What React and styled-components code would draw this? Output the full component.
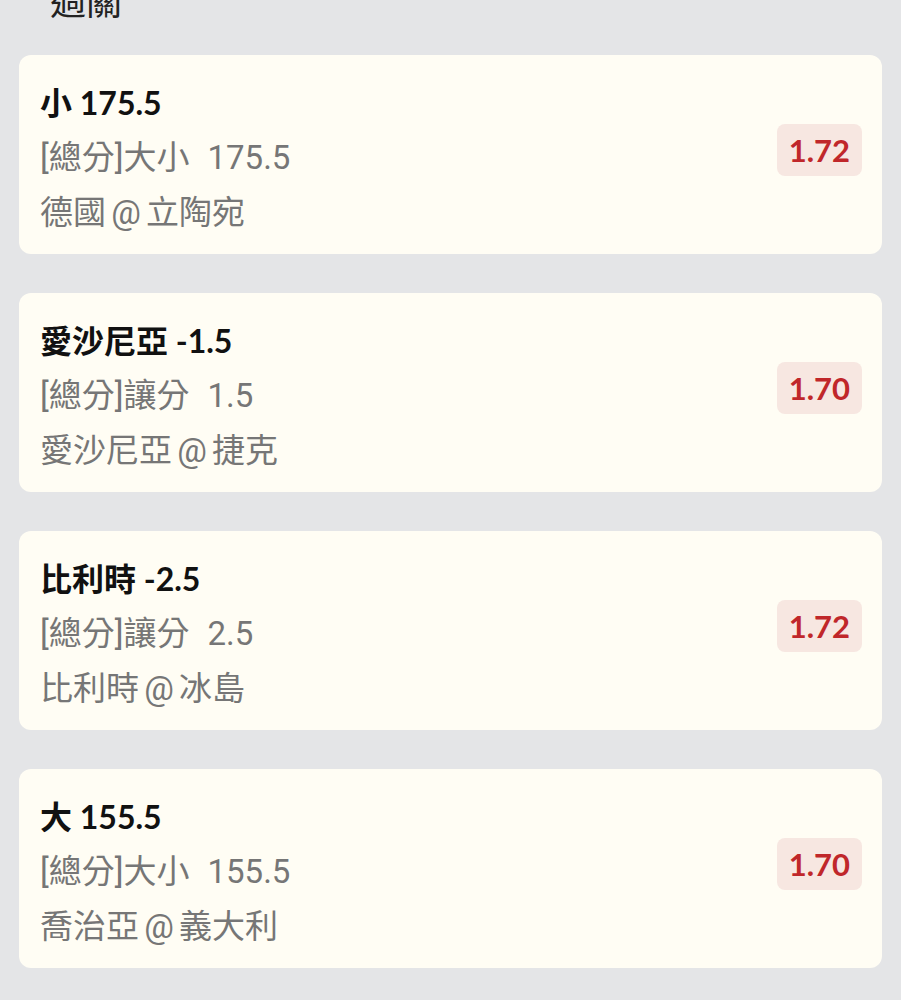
import styled, { createGlobalStyle } from "styled-components";

const GlobalStyle = createGlobalStyle`
  html, body {
    margin: 0;
    padding: 0;
    background: #e4e5e7;
  }
  body {
    font-family: Lato, "Noto Sans CJK TC", sans-serif;
    overflow: hidden;
  }
`;

const bets = [
  { title: "小 175.5", market: "[總分]大小", line: "175.5", match: "德國 @ 立陶宛", odds: "1.72" },
  { title: "愛沙尼亞 -1.5", market: "[總分]讓分", line: "1.5", match: "愛沙尼亞 @ 捷克", odds: "1.70" },
  { title: "比利時 -2.5", market: "[總分]讓分", line: "2.5", match: "比利時 @ 冰島", odds: "1.72" },
  { title: "大 155.5", market: "[總分]大小", line: "155.5", match: "喬治亞 @ 義大利", odds: "1.70" },
];

export default function App() {
  return (
    <>
      <GlobalStyle />
      <Page>
        <SectionTitle>過關</SectionTitle>
        <List>
          {bets.map((b, i) => (
            <Card key={i}>
              <Info>
                <Title>{b.title}</Title>
                <Line>
                  {b.market}
                  <Num>{b.line}</Num>
                </Line>
                <Line $tight>{b.match}</Line>
              </Info>
              <Odds>{b.odds}</Odds>
            </Card>
          ))}
        </List>
      </Page>
    </>
  );
}

const Page = styled.div`
  width: 901px;
  min-height: 1000px;
  box-sizing: border-box;
  padding: 0 19px;
`;

const SectionTitle = styled.h2`
  margin: -19px 0 0 31px;
  height: 74px;
  font-family: "Noto Sans CJK TC", sans-serif;
  font-size: 36px;
  line-height: 36px;
  font-weight: 400;
  color: #222;
`;

const List = styled.div`
  display: flex;
  flex-direction: column;
  gap: 39px;
`;

const Card = styled.div`
  display: flex;
  align-items: center;
  justify-content: space-between;
  height: 199px;
  box-sizing: border-box;
  padding: 19px 20px 14px 21px;
  background: #fffdf4;
  border-radius: 12px;
`;

const Info = styled.div`
  display: flex;
  flex-direction: column;
`;

const Title = styled.div`
  font-size: 32px;
  line-height: 55px;
  font-weight: 700;
  color: #111;
`;

const Line = styled.div`
  font-family: Roboto, "Noto Sans CJK TC", sans-serif;
  font-size: 33px;
  line-height: 55px;
  color: #767676;
  word-spacing: ${({ $tight }) => ($tight ? "-3px" : "0")};
`;

const Num = styled.span`
  margin-left: 18px;
`;

const Odds = styled.div`
  margin-bottom: 15px;
  padding: 0 12px;
  height: 52px;
  display: flex;
  align-items: center;
  border-radius: 8px;
  background: #f7e7e1;
  color: #c0272a;
  font-size: 31px;
  font-weight: 700;
`;
